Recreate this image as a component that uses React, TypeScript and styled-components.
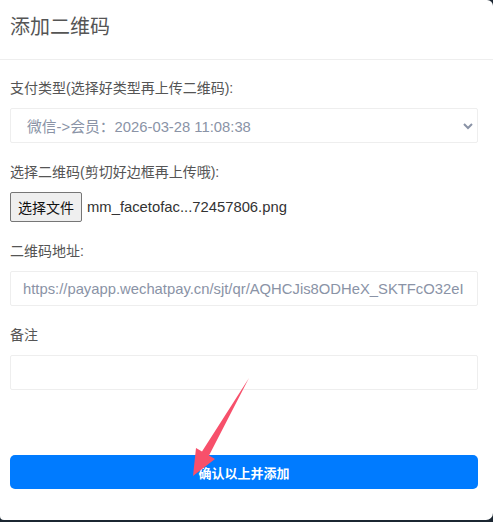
import React, { useState } from "react";
import styled, { createGlobalStyle } from "styled-components";

const GlobalStyle = createGlobalStyle`
  html, body {
    margin: 0;
    padding: 0;
    background: #1b2631;
  }
  body {
    font-family: "Liberation Sans", "Noto Sans CJK SC", sans-serif;
  }
`;

const Dialog = styled.div`
  position: relative;
  width: 493px;
  height: 520px;
  background: #fff;
  border-radius: 0 6px 7px 4px;
  box-sizing: border-box;
  display: flex;
  flex-direction: column;
  overflow: hidden;
`;

const Header = styled.div`
  height: 59px;
  padding: 0 10px;
  border-bottom: 1px solid #eeeeee;
  display: flex;
  align-items: center;
`;

const Title = styled.h4`
  margin: 0;
  font-size: 20px;
  line-height: 28px;
  font-weight: 400;
  color: #555;
  margin-top: -6px;
`;

const Body = styled.div`
  padding: 18px 15px 0 10px;
`;

const Group = styled.div`
  margin-bottom: 19px;
`;

const Label = styled.label`
  display: block;
  font-size: 14px;
  line-height: 20px;
  color: #555;
  margin-bottom: 10px;
`;

const SelectBox = styled.div`
  position: relative;
  height: 35px;
  border: 1px solid #eeeeee;
  border-radius: 2px;
  box-sizing: border-box;
  display: flex;
  align-items: center;
  padding: 0 16px;
  font-size: 14.8px;
  color: #8a93a6;
`;

const Chevron = styled.svg`
  position: absolute;
  right: 4px;
  top: 13px;
`;

const FileRow = styled.div`
  display: flex;
  align-items: center;
  gap: 5px;
  font-size: 14.8px;
  color: #333;
`;

const FileButton = styled.button`
  height: 30px;
  padding: 0 7px;
  font-family: inherit;
  font-size: 14px;
  color: #111;
  background: #efefef;
  border: 1px solid #767676;
  border-radius: 2px;
`;

const Field = styled.input`
  display: block;
  width: 100%;
  height: 35px;
  box-sizing: border-box;
  border: 1px solid #eeeeee;
  border-radius: 2px;
  padding: 0 12px;
  font-family: inherit;
  font-size: 14.8px;
  color: #8a93a6;
  outline: none;
`;

const Footer = styled.div`
  padding: 46px 15px 0 10px;
`;

const Submit = styled.button`
  width: 100%;
  height: 34px;
  border: none;
  border-radius: 5px;
  background: #007bff;
  color: #fff;
  font-family: inherit;
  font-size: 13px;
  font-weight: 700;
`;

const Arrow = styled.svg`
  position: absolute;
  left: 0;
  top: 0;
  pointer-events: none;
`;

const App = () => {
  const [remark, setRemark] = useState("");

  return (
    <>
      <GlobalStyle />
      <Dialog>
        <Header>
          <Title>添加二维码</Title>
        </Header>
        <Body>
          <Group>
            <Label>支付类型(选择好类型再上传二维码):</Label>
            <SelectBox>
              微信-&gt;会员：2026-03-28 11:08:38
              <Chevron width="10" height="8" viewBox="0 0 10 8">
                <path d="M1 2 L5 6 L9 2" fill="none" stroke="#8a93a6" strokeWidth="2" />
              </Chevron>
            </SelectBox>
          </Group>
          <Group>
            <Label>选择二维码(剪切好边框再上传哦):</Label>
            <FileRow>
              <FileButton>选择文件</FileButton>
              mm_facetofac...72457806.png
            </FileRow>
          </Group>
          <Group>
            <Label>二维码地址:</Label>
            <Field
              readOnly
              value="https://payapp.wechatpay.cn/sjt/qr/AQHCJis8ODHeX_SKTFcO32eI"
            />
          </Group>
          <Group>
            <Label>备注</Label>
            <Field value={remark} onChange={(e) => setRemark(e.target.value)} />
          </Group>
        </Body>
        <Footer>
          <Submit>确认以上并添加</Submit>
        </Footer>
        <Arrow width="493" height="520" viewBox="0 0 493 520">
          <polygon
            points="249,378 209,455.5 215,459 193,476 196,448 202,451.5"
            fill="#f7506b"
          />
        </Arrow>
      </Dialog>
    </>
  );
};

export default App;
